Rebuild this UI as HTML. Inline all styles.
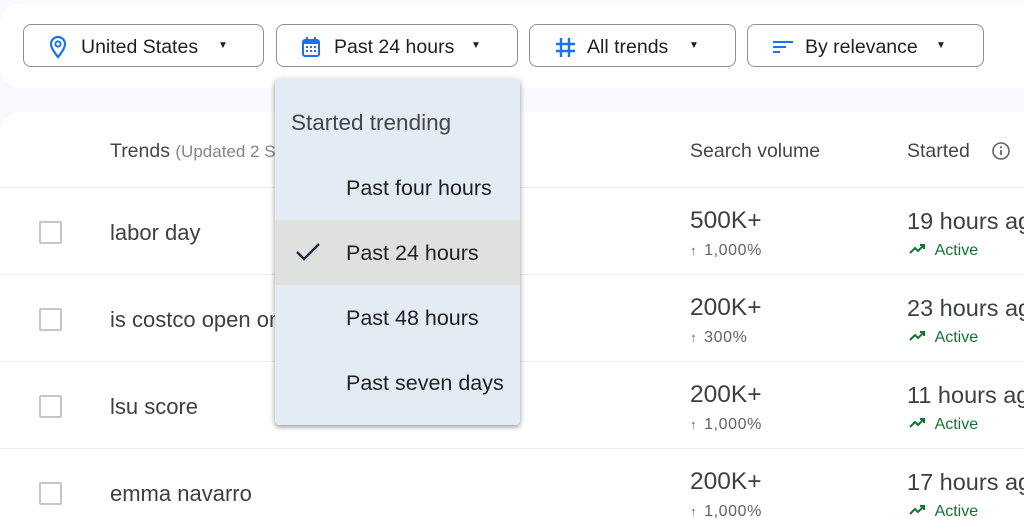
<!DOCTYPE html><html><head><style>
body{margin:0;width:1024px;height:524px;background:#f8fafd;font-family:"Liberation Sans",Arial,sans-serif;position:relative;overflow:hidden;color:#1f1f1f}
.top{position:absolute;left:0;top:3px;width:1040px;height:85px;background:#fff;border-radius:22px 0 0 22px}
.tbl{position:absolute;left:0;top:112px;width:1040px;height:420px;background:#fff;border-radius:22px 0 0 0}
.btn{position:absolute;top:24px;height:43px;border:1px solid #8e918f;border-radius:8px;box-sizing:border-box;font-size:19.5px;color:#1f1f1f}
.btn svg{position:absolute;left:24px;top:10px}
.btn .t{position:absolute;left:57px;top:11px;white-space:nowrap}
.btn .c{position:absolute;font-size:10px;top:15px}
.hd{position:absolute;top:140px;font-size:19.5px;color:#444746;white-space:nowrap}
.sep{position:absolute;left:0;width:1024px;height:1px;background:#eceeef}
.cb{position:absolute;left:39px;width:19px;height:19px;border:2px solid #c4c7c5;border-radius:2px}
.nm{position:absolute;left:110px;font-size:22px;color:#3c4043;white-space:nowrap}
.vol{position:absolute;left:690px;font-size:24.5px;color:#3c4043}
.pct{position:absolute;left:690px;font-size:16px;color:#5f6368;letter-spacing:.6px}
.pct b{font-weight:normal;font-size:13px;margin-right:7px}
.st{position:absolute;left:907px;font-size:23.5px;color:#3c4043;white-space:nowrap}
.act{position:absolute;left:909px;font-size:16px;color:#137333}
.act svg{margin-right:4px}
.dd{position:absolute;left:275px;top:79px;width:245px;height:346px;background:#e3ebf5;border-radius:4px;box-shadow:0 2px 4px rgba(0,0,0,.3),0 1px 8px rgba(0,0,0,.15)}
.dd div{position:absolute;font-size:21.5px;color:#1f1f1f;white-space:nowrap}
</style></head><body>
<div class="top"></div>
<div class="btn" style="left:23px;width:241px"><svg width="20" height="24" viewBox="0 0 20 24"><path d="M10 2a7 7 0 0 0-7 7c0 5 7 13 7 13s7-8 7-13a7 7 0 0 0-7-7z" fill="none" stroke="#1a73e8" stroke-width="2.2"/><circle cx="10" cy="9" r="2.6" fill="none" stroke="#1a73e8" stroke-width="2"/></svg><span class="t">United States</span><span class="c" style="left:194px">▼</span></div>
<div class="btn" style="left:276px;width:242px"><svg width="20" height="24" viewBox="0 0 20 24"><rect x="2" y="5" width="16" height="16" rx="2" fill="none" stroke="#1a73e8" stroke-width="2"/><rect x="2" y="5" width="16" height="4" fill="#1a73e8"/><path d="M6 2v4M14 2v4" stroke="#1a73e8" stroke-width="2"/><path d="M5 12h2M9 12h2M13 12h2M5 16h2M9 16h2M13 16h2" stroke="#1a73e8" stroke-width="2"/></svg><span class="t">Past 24 hours</span><span class="c" style="left:194px">▼</span></div>
<div class="btn" style="left:529px;width:207px"><svg width="22" height="24" viewBox="0 0 22 24"><path d="M7 3v19M15 3v19M2 9h19M2 16h19" stroke="#1a73e8" stroke-width="2.4"/></svg><span class="t">All trends</span><span class="c" style="left:159px">▼</span></div>
<div class="btn" style="left:747px;width:237px"><svg width="22" height="24" viewBox="0 0 22 24"><path d="M1 7h20M1 12h13M1 17h7" stroke="#1a73e8" stroke-width="2"/></svg><span class="t">By relevance</span><span class="c" style="left:188px">▼</span></div>
<div class="tbl"></div>
<div class="hd" style="left:110px">Trends <span style="font-size:17px;color:#80868b">(Updated 2 Seconds ago)</span></div>
<div class="hd" style="left:690px">Search volume</div>
<div class="hd" style="left:907px">Started</div>
<svg style="position:absolute;left:991px;top:141px" width="20" height="20" viewBox="0 0 20 20"><circle cx="10" cy="10" r="8" fill="none" stroke="#5f6368" stroke-width="1.6"/><path d="M10 9v5" stroke="#5f6368" stroke-width="1.8"/><circle cx="10" cy="6.3" r="1.1" fill="#5f6368"/></svg>
<div class="sep" style="top:187px"></div><div class="sep" style="top:274px"></div><div class="sep" style="top:361px"></div><div class="sep" style="top:448px"></div>
<div class="cb" style="top:221px"></div><div class="nm" style="top:220px">labor day</div><div class="vol" style="top:207px">500K+</div><div class="pct" style="top:242px"><b>↑</b>1,000%</div><div class="st" style="top:208px">19 hours ago</div><div class="act" style="top:242px"><svg width="18" height="12" viewBox="0 0 18 12"><path d="M1 10l5-5 3 3 6-6M11 2h4v4" fill="none" stroke="#137333" stroke-width="2"/></svg> Active</div>
<div class="cb" style="top:308px"></div><div class="nm" style="top:307px">is costco open on labor day</div><div class="vol" style="top:294px">200K+</div><div class="pct" style="top:329px"><b>↑</b>300%</div><div class="st" style="top:295px">23 hours ago</div><div class="act" style="top:329px"><svg width="18" height="12" viewBox="0 0 18 12"><path d="M1 10l5-5 3 3 6-6M11 2h4v4" fill="none" stroke="#137333" stroke-width="2"/></svg> Active</div>
<div class="cb" style="top:395px"></div><div class="nm" style="top:394px">lsu score</div><div class="vol" style="top:381px">200K+</div><div class="pct" style="top:416px"><b>↑</b>1,000%</div><div class="st" style="top:382px">11 hours ago</div><div class="act" style="top:416px"><svg width="18" height="12" viewBox="0 0 18 12"><path d="M1 10l5-5 3 3 6-6M11 2h4v4" fill="none" stroke="#137333" stroke-width="2"/></svg> Active</div>
<div class="cb" style="top:482px"></div><div class="nm" style="top:481px">emma navarro</div><div class="vol" style="top:468px">200K+</div><div class="pct" style="top:503px"><b>↑</b>1,000%</div><div class="st" style="top:469px">17 hours ago</div><div class="act" style="top:503px"><svg width="18" height="12" viewBox="0 0 18 12"><path d="M1 10l5-5 3 3 6-6M11 2h4v4" fill="none" stroke="#137333" stroke-width="2"/></svg> Active</div>
<div class="dd">
<div style="left:16px;top:31px;color:#444746;font-size:22.5px">Started trending</div>
<div style="left:71px;top:97px">Past four hours</div>
<div style="left:0;top:141px;width:245px;height:65px;background:#dfe1df"></div>
<svg style="position:absolute;left:20px;top:163px" width="26" height="20" viewBox="0 0 26 20"><path d="M2 10l7 7L24 2" fill="none" stroke="#1c2b3f" stroke-width="2.4"/></svg>
<div style="left:71px;top:162px">Past 24 hours</div>
<div style="left:71px;top:227px">Past 48 hours</div>
<div style="left:71px;top:292px">Past seven days</div>
</div>
</body></html>
